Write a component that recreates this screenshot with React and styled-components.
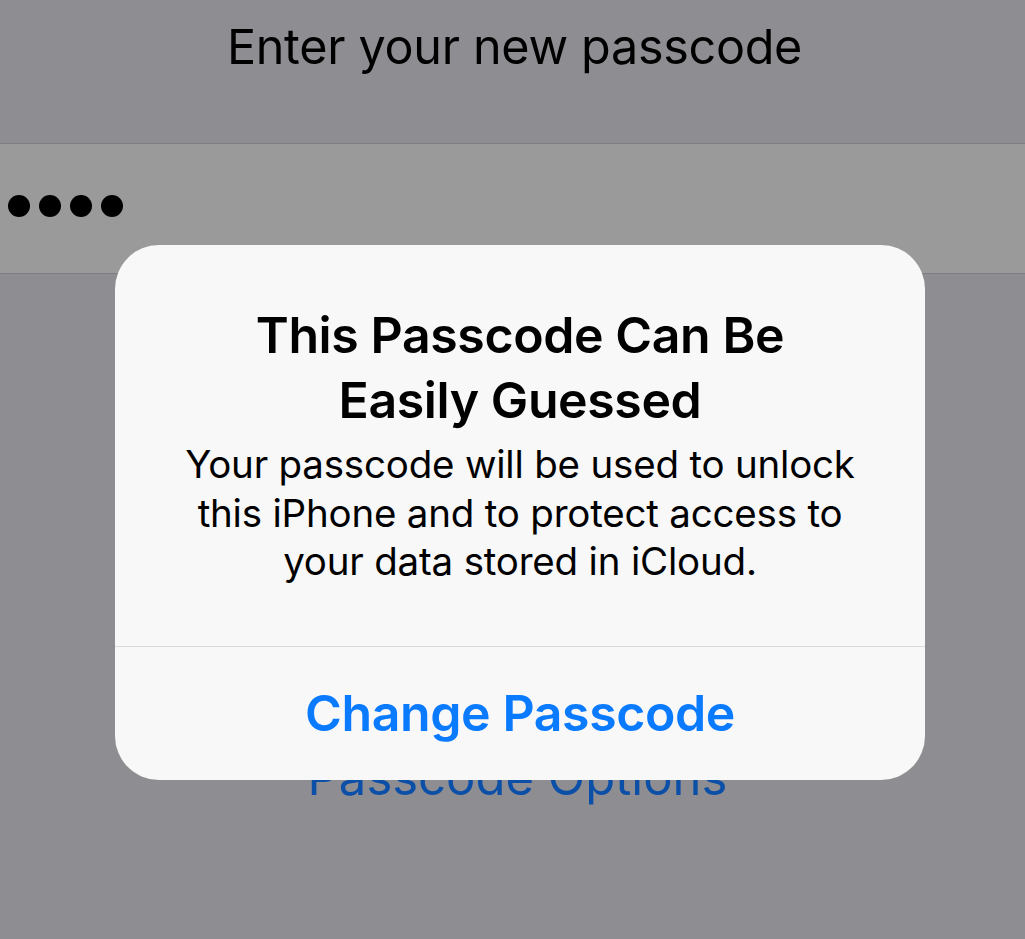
import React from 'react';
import styled, { createGlobalStyle } from 'styled-components';

const GlobalStyle = createGlobalStyle`
  html, body {
    margin: 0;
    padding: 0;
    background: #8e8d92;
  }
  body {
    font-family: Inter, "Open Sans", "Liberation Sans", sans-serif;
    -webkit-font-smoothing: antialiased;
  }
`;

const Screen = styled.div`
  position: relative;
  width: 1025px;
  height: 939px;
  overflow: hidden;
  background: #8e8d92;
  display: flex;
  flex-direction: column;
`;

const Prompt = styled.div`
  height: 143px;
  display: flex;
  justify-content: center;
  padding-top: 19px;
  padding-left: 4px;
  box-sizing: border-box;
  font-size: 48.5px;
  font-weight: 400;
  letter-spacing: -0.3px;
  line-height: 56px;
  color: #000;
`;

const FieldBand = styled.div`
  height: 131px;
  box-sizing: border-box;
  background: #9a9a9a;
  border-top: 1px solid #7e7e82;
  border-bottom: 1px solid #7e7e82;
  display: flex;
  align-items: center;
  padding-left: 8px;
  padding-bottom: 6px;
`;

const Dots = styled.div`
  display: flex;
  gap: 9px;
`;

const Dot = styled.span`
  width: 22px;
  height: 22px;
  border-radius: 50%;
  background: #000;
`;

const OptionsLink = styled.div`
  margin-top: 474px;
  padding-left: 10px;
  text-align: center;
  font-size: 49px;
  line-height: 60px;
  font-weight: 400;
  color: #0c4fa7;
`;

const Alert = styled.div`
  position: absolute;
  left: 115px;
  top: 245px;
  width: 810px;
  height: 535px;
  border-radius: 44px;
  background: #f8f8f9;
  display: flex;
  flex-direction: column;
  overflow: hidden;
`;

const AlertBody = styled.div`
  padding: 58px 30px 0;
  height: 402px;
  box-sizing: border-box;
  text-align: center;
  border-bottom: 1.5px solid #dbdbdd;
`;

const AlertTitle = styled.div`
  font-size: 50px;
  line-height: 65px;
  font-weight: 600;
  letter-spacing: -0.4px;
  color: #000;
`;

const AlertMessage = styled.div`
  margin-top: 7px;
  font-size: 38.5px;
  line-height: 48.5px;
  font-weight: 400;
  letter-spacing: -0.2px;
  color: #000;
`;

const AlertButton = styled.button`
  flex: 1;
  border: 0;
  background: transparent;
  font-family: inherit;
  font-size: 50px;
  font-weight: 600;
  letter-spacing: -0.4px;
  color: #0a7aff;
  padding: 0 0 2px;
  cursor: pointer;
`;

export default function App() {
  return (
    <>
      <GlobalStyle />
      <Screen>
        <Prompt>Enter your new passcode</Prompt>
        <FieldBand>
          <Dots>
            {[0, 1, 2, 3].map((i) => (
              <Dot key={i} />
            ))}
          </Dots>
        </FieldBand>
        <OptionsLink>Passcode Options</OptionsLink>

        <Alert>
          <AlertBody>
            <AlertTitle>
              This Passcode Can Be
              <br />
              Easily Guessed
            </AlertTitle>
            <AlertMessage>
              Your passcode will be used to unlock
              <br />
              this iPhone and to protect access to
              <br />
              your data stored in iCloud.
            </AlertMessage>
          </AlertBody>
          <AlertButton>Change Passcode</AlertButton>
        </Alert>
      </Screen>
    </>
  );
}
